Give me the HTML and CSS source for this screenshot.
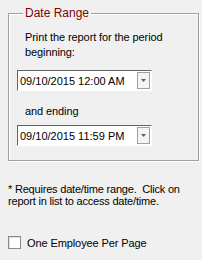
FILE: index.html
```html
<!DOCTYPE html>
<html>
<head>
<meta charset="utf-8">
<link rel="stylesheet" href="styles.css">
</head>
<body>
<div class="page">
  <fieldset class="group">
    <legend class="group-title">Date Range</legend>
    <p class="label">Print the report for the period beginning:</p>
    <div class="combo">
      <span class="combo-text">09/10/2015 12:00 AM</span>
      <span class="combo-btn"><svg width="5" height="3" viewBox="0 0 5 3"><path d="M0 0h5L2.5 3z" fill="#606060"/></svg></span>
    </div>
    <p class="label label-end">and ending</p>
    <div class="combo combo-last">
      <span class="combo-text">09/10/2015 11:59 PM</span>
      <span class="combo-btn"><svg width="5" height="3" viewBox="0 0 5 3"><path d="M0 0h5L2.5 3z" fill="#606060"/></svg></span>
    </div>
  </fieldset>
  <p class="note">* Requires date/time range.&nbsp; Click on report in list to access date/time.</p>
  <label class="check">
    <span class="check-box"></span>
    <span class="check-label">One Employee Per Page</span>
  </label>
</div>
</body>
</html>
```
FILE: styles.css
```css
html, body {
  margin: 0;
  padding: 0;
  background: #f0f0f0;
}
body {
  font-family: "Liberation Sans", Arial, sans-serif;
  font-size: 11px;
  color: #000;
  width: 202px;
  height: 260px;
  overflow: hidden;
}
.page {
  padding: 6px 3px 0 8px;
}
.group {
  margin: 0;
  padding: 10px 0 14px 8px;
  border: 1px solid #a0a0a0;
  box-shadow: inset 1px 1px 0 #fff, 1px 1px 0 #fff;
  min-width: 0;
}
.group-title {
  color: #800000;
  font-size: 12px;
  padding: 0 2px;
  margin-left: 6px;
  line-height: 14px;
}
.label {
  margin: 0 0 0 8px;
  line-height: 15px;
  width: 160px;
  font-size: 11px;
  letter-spacing: -0.1px;
}
.label-end {
  margin-top: 13px;
}
.combo {
  margin-top: 10px;
  width: 133px;
  height: 19px;
  border: 1px solid;
  border-color: #646464 #fff #fff #646464;
  background: #fff;
  display: flex;
  align-items: center;
  justify-content: space-between;
}
.combo-last {
  margin-top: 6px;
}
.combo-text {
  padding-left: 2px;
  font-size: 11px;
  letter-spacing: 0;
}
.combo-btn {
  width: 11px;
  height: 15px;
  margin-right: 1px;
  border: 1px solid #a0a0a0;
  background: #f4f4f4;
  display: flex;
  align-items: center;
  justify-content: center;
}
.note {
  margin: 22px 0 0 0;
  line-height: 12px;
  letter-spacing: -0.2px;
}
.check {
  display: flex;
  align-items: center;
  margin-top: 29px;
}
.check-box {
  width: 11px;
  height: 11px;
  border: 1px solid #8a8a8a;
  background: #fff;
  box-shadow: inset 1px 1px 0 #e0e0e0;
}
.check-label {
  margin-left: 6px;
  font-size: 11px;
  letter-spacing: -0.1px;
}
```
